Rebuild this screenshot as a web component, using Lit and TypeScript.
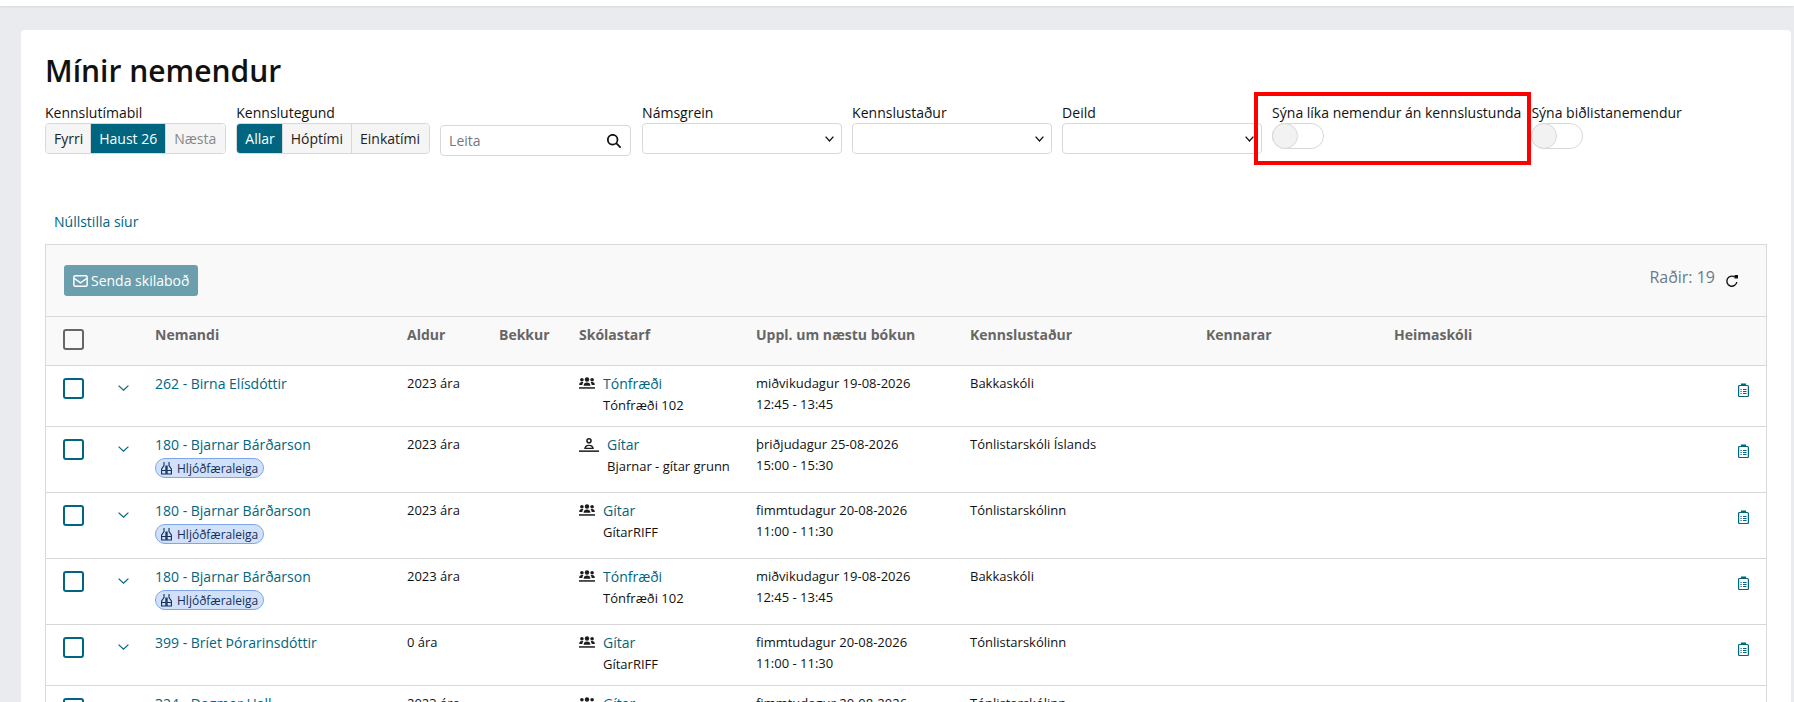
import { LitElement, css, html, svg } from "lit";
import { customElement } from "lit/decorators.js";

type Row = {
  name: string;
  badge?: boolean;
  age: string;
  single?: boolean;
  activity: string;
  group: string;
  day: string;
  time: string;
  place: string;
};

const rows: Row[] = [
  { name: "262 - Birna Elísdóttir", age: "2023 ára", activity: "Tónfræði", group: "Tónfræði 102", day: "miðvikudagur 19-08-2026", time: "12:45 - 13:45", place: "Bakkaskóli" },
  { name: "180 - Bjarnar Bárðarson", badge: true, age: "2023 ára", single: true, activity: "Gítar", group: "Bjarnar - gítar grunn", day: "þriðjudagur 25-08-2026", time: "15:00 - 15:30", place: "Tónlistarskóli Íslands" },
  { name: "180 - Bjarnar Bárðarson", badge: true, age: "2023 ára", activity: "Gítar", group: "GítarRIFF", day: "fimmtudagur 20-08-2026", time: "11:00 - 11:30", place: "Tónlistarskólinn" },
  { name: "180 - Bjarnar Bárðarson", badge: true, age: "2023 ára", activity: "Tónfræði", group: "Tónfræði 102", day: "miðvikudagur 19-08-2026", time: "12:45 - 13:45", place: "Bakkaskóli" },
  { name: "399 - Bríet Þórarinsdóttir", age: "0 ára", activity: "Gítar", group: "GítarRIFF", day: "fimmtudagur 20-08-2026", time: "11:00 - 11:30", place: "Tónlistarskólinn" },
  { name: "324 - Dagmar Hall", age: "2023 ára", activity: "Gítar", group: "GítarRIFF", day: "fimmtudagur 20-08-2026", time: "11:00 - 11:30", place: "Tónlistarskólinn" },
];

const rowChevron = html`<svg viewBox="0 0 11 6" width="11" height="6"><path d="M.6.6l4.900 4.600L10.400.6" fill="none" stroke="currentColor" stroke-width="1.200"/></svg>`;

const selectChevron = html`<svg viewBox="0 0 9 6" width="9" height="6"><path d="M.6.6l3.900 4.400L8.400.6" fill="none" stroke="currentColor" stroke-width="1.300"/></svg>`;

const groupIcon = html`<svg viewBox="0 0 16 12" width="16" height="12"><g fill="#1c1c1c">
  <circle cx="8" cy="2.500" r="2.200"/><circle cx="2.900" cy="2.700" r="1.800"/><circle cx="13.100" cy="2.700" r="1.800"/>
  <path d="M4.600 8.800c0-2.100 1.300-3.300 3.400-3.300s3.400 1.200 3.400 3.300zM.2 7.900c0-1.800 1-2.800 2.700-2.800.6 0 1.100.1 1.500.4-.7.6-1 1.400-1.100 2.400zM15.800 7.900c0-1.800-1-2.800-2.700-2.800-.6 0-1.100.1-1.500.4.700.6 1 1.400 1.100 2.400z"/>
  <rect x="0" y="10.200" width="16" height="1.500"/></g></svg>`;

const singleIcon = html`<svg viewBox="0 0 20 14" width="20" height="14"><g fill="#1c1c1c">
  <path fill-rule="evenodd" d="M10 0a2.800 2.800 0 110 5.600A2.800 2.800 0 0110 0zm0 1.500a1.300 1.300 0 100 2.600 1.300 1.300 0 000-2.600z"/>
  <path fill-rule="evenodd" d="M5.200 11c0-2.800 1.900-4.300 4.800-4.300s4.800 1.500 4.800 4.300zM7 9.700h6c-.4-1-1.500-1.600-3-1.600s-2.600.6-3 1.600z"/>
  <rect x="0" y="12.400" width="20" height="1.500"/></g></svg>`;

const binoculars = html`<svg viewBox="0 0 11 14" width="11" height="14"><g fill="none" stroke="#12305c" stroke-width="1.100">
  <path d="M3 1v3.500L.6 8v5h4.300V4.500M8 1v3.500L10.400 8v5H6.100V4.500M4.900 6.500h1.200"/><path d="M.6 9.500h4.300M6.100 9.500h4.300"/></g></svg>`;

const clipboard = svg`<svg viewBox="0 0 11 14" width="11" height="14"><g fill="none" stroke="currentColor">
  <rect x=".6" y="2.500" width="9.800" height="11" rx="1" stroke-width="1.200"/>
  <path d="M3.500 3V1h4v2" fill="currentColor" stroke-width="1.200"/>
  <path d="M5 6.500h3.500M5 8.500h3.500M5 10.500h3.500M2.500 6.500h1.200M2.500 8.500h1.200M2.500 10.500h1.200" stroke-width="1"/></g></svg>`;

@customElement("app-root")
export class AppRoot extends LitElement {
  renderFilter(label: string) {
    return html`
      <label class="field">
        <span>${label}</span>
        <div class="select">${selectChevron}</div>
      </label>
    `;
  }

  renderRow(r: Row) {
    return html`
      <div class="row ${r.badge || r.single ? "tall" : ""}">
        <div class="c-check"><span class="box"></span></div>
        <div class="c-chev">${rowChevron}</div>
        <div>
          <a class="link">${r.name}</a>
          ${r.badge
            ? html`<div class="badge">${binoculars}<span>Hljóðfæraleiga</span></div>`
            : ""}
        </div>
        <div>${r.age}</div>
        <div></div>
        <div class="activity">
          <div class="type">${r.single ? singleIcon : groupIcon}</div>
          <div>
            <a class="link">${r.activity}</a>
            <div class="sub">${r.group}</div>
          </div>
        </div>
        <div class="when"><div>${r.day}</div><div>${r.time}</div></div>
        <div>${r.place}</div>
        <div></div>
        <div></div>
        <div class="c-action">${clipboard}</div>
      </div>
    `;
  }

  render() {
    return html`
      <div class="topbar"></div>
      <main class="card">
        <h1>Mínir nemendur</h1>
        <div class="filters">
          <div class="field">
            <span>Kennslutímabil</span>
            <div class="seg">
              <button>Fyrri</button>
              <button class="on">Haust 26</button>
              <button class="off">Næsta</button>
            </div>
          </div>
          <div class="field">
            <span>Kennslutegund</span>
            <div class="seg">
              <button class="on">Allar</button>
              <button>Hóptími</button>
              <button>Einkatími</button>
            </div>
          </div>
          <div class="search">
            <span>Leita</span>
            <svg viewBox="0 0 512 512" width="14" height="14"><path fill="#111" d="M416 208c0 45.900-14.900 88.300-40 122.700L502.600 457.400c12.500 12.500 12.500 32.800 0 45.300s-32.800 12.500-45.300 0L330.700 376c-34.400 25.200-76.800 40-122.700 40C93.100 416 0 322.900 0 208S93.100 0 208 0S416 93.100 416 208zM208 352a144 144 0 1 0 0-288 144 144 0 1 0 0 288z"/></svg>
          </div>
          ${this.renderFilter("Námsgrein")}
          ${this.renderFilter("Kennslustaður")}
          ${this.renderFilter("Deild")}
          <div class="toggle-field">
            <span>Sýna líka nemendur án kennslustunda</span>
            <div class="toggle"></div>
            <div class="red"></div>
          </div>
          <div class="toggle-field">
            <span>Sýna biðlistanemendur</span>
            <div class="toggle"></div>
          </div>
        </div>
        <a class="link reset">Núllstilla síur</a>
        <section class="table">
          <div class="toolbar">
            <button class="send">
              <svg viewBox="0 0 16 13" width="15" height="12"><g fill="none" stroke="currentColor" stroke-width="1.600"><rect x=".8" y=".8" width="14.400" height="11.400" rx="1.500"/><path d="M1 3.500l7 5 7-5"/></g></svg>
              Senda skilaboð
            </button>
            <div class="count">
              <span>Raðir: 19</span>
              <svg viewBox="0 0 14 14" width="14" height="14"><path d="M11.800 8a5 5 0 11-2.200-5" fill="none" stroke="#111" stroke-width="1.400"/><path d="M9.500 1H13v3.500H9.500z" fill="#111"/></svg>
            </div>
          </div>
          <div class="row head">
            <div class="c-check"><span class="box"></span></div>
            <div></div>
            <div>Nemandi</div>
            <div>Aldur</div>
            <div>Bekkur</div>
            <div>Skólastarf</div>
            <div>Uppl. um næstu bókun</div>
            <div>Kennslustaður</div>
            <div>Kennarar</div>
            <div>Heimaskóli</div>
            <div></div>
          </div>
          ${rows.map((r) => this.renderRow(r))}
        </section>
      </main>
    `;
  }

  static styles = css`
    :host {
      display: block;
      height: 702px;
      overflow: hidden;
      background: #e9ebef;
      font-family: "Open Sans", sans-serif;
      font-size: 13px;
      color: #111;
    }

    .topbar {
      height: 6px;
      background: #fff;
      box-shadow: 0 1px 3px rgba(0, 0, 0, 0.08);
    }

    .card {
      margin: 24px 3px 0 21px;
      padding: 22px 24px 0;
      background: #fff;
      border-radius: 4px;
    }

    h1 {
      margin: 0;
      font-size: 30px;
      line-height: 38px;
      font-weight: 600;
      height: 51px;
    }

    .link {
      color: #00667f;
      font-size: 14px;
    }

    .filters {
      display: flex;
      align-items: flex-start;
      height: 109px;
    }

    .field {
      display: flex;
      flex-direction: column;
      margin-right: 10px;
      font-size: 14px;
      line-height: 19px;
    }

    .seg {
      display: flex;
      height: 31px;
      margin-top: 1px;
      border-radius: 4px;
      overflow: hidden;
      border: 1px solid #d8d8d8;
      box-sizing: border-box;
    }

    .seg button {
      padding: 0 8px;
      border: 0;
      border-left: 1px solid #d8d8d8;
      background: #f5f5f5;
      font: inherit;
      font-size: 14px;
      color: #222;
    }

    .seg button:first-child {
      border-left: 0;
      padding-right: 7px;
    }

    .seg button:last-child {
      padding-right: 9px;
    }

    .seg .on {
      background: #00667f;
      color: #fff;
    }

    .seg .off {
      color: #888;
    }

    .search {
      box-sizing: border-box;
      display: flex;
      align-items: center;
      justify-content: space-between;
      width: 191px;
      height: 31px;
      margin: 22px 11px 0 0;
      padding: 0 9px 0 8px;
      border: 1px solid #d8d8d8;
      border-radius: 4px;
      font-size: 14px;
      color: #777;
    }

    .select {
      box-sizing: border-box;
      display: flex;
      align-items: center;
      justify-content: flex-end;
      width: 200px;
      height: 31px;
      margin-top: 1px;
      padding-right: 7px;
      border: 1px solid #d8d8d8;
      border-radius: 4px;
      color: #111;
    }

    .toggle-field {
      position: relative;
      font-size: 14px;
      line-height: 19px;
      white-space: nowrap;
      margin-right: 10px;
    }

    .toggle {
      box-sizing: border-box;
      position: relative;
      width: 52px;
      height: 26px;
      margin-top: 1px;
      border: 1px solid #d8d8d8;
      border-radius: 13px;
    }

    .toggle::before {
      content: "";
      position: absolute;
      left: -1px;
      top: -1px;
      box-sizing: border-box;
      width: 26px;
      height: 26px;
      border: 1px solid #d8d8d8;
      border-radius: 50%;
      background: #f2f2f2;
    }

    .red {
      position: absolute;
      left: -18px;
      top: -11px;
      width: 277px;
      height: 73px;
      box-sizing: border-box;
      border: 4px solid #f00;
    }

    .reset {
      display: block;
      margin-left: 9px;
      height: 32px;
      line-height: 19px;
    }

    .table {
      border: 1px solid #d8d8de;
      border-bottom: 0;
    }

    .toolbar {
      display: flex;
      align-items: flex-start;
      justify-content: space-between;
      height: 71px;
      box-sizing: border-box;
      padding: 20px 27px 0 18px;
      background: #f9f9f9;
    }

    .send {
      display: flex;
      align-items: center;
      gap: 3px;
      height: 31px;
      padding: 0 9px;
      border: 0;
      border-radius: 3px;
      background: #6b9fae;
      color: #fff;
      font: inherit;
      font-size: 14px;
    }

    .count {
      display: flex;
      align-items: center;
      gap: 10px;
      margin-top: 1px;
      font-size: 16px;
      line-height: 22px;
      color: #6c7a89;
    }

    .count svg {
      margin-top: 7px;
    }

    .row {
      display: grid;
      grid-template-columns: 69px 40px 252px 92px 80px 177px 214px 236px 188px 1fr 28px;
      height: 61px;
      box-sizing: border-box;
      padding-top: 8px;
      border-top: 1px solid #d8d8d8;
      font-size: 13px;
      line-height: 19px;
    }

    .row.tall {
      height: 66px;
    }

    .row.head {
      height: 49px;
      background: #f9f9f9;
      font-size: 14px;
      font-weight: 700;
      color: #666;
    }

    .c-check {
      padding: 4px 0 0 17px;
    }

    .box {
      display: block;
      width: 21px;
      height: 21px;
      box-sizing: border-box;
      border: 2px solid #00667f;
      border-radius: 3px;
    }

    .head .box {
      border-color: #666;
    }

    .c-chev {
      padding: 11px 0 0 3px;
      color: #00667f;
      line-height: 0;
    }

    .badge {
      display: inline-flex;
      align-items: center;
      gap: 5px;
      box-sizing: border-box;
      height: 20px;
      margin-top: 3px;
      padding: 0 5px;
      border: 1px solid #7fa6e8;
      border-radius: 10px;
      background: #d2e1fa;
      font-size: 12px;
      color: #12305c;
    }

    .activity {
      display: flex;
      gap: 8px;
    }

    .type {
      line-height: 0;
      padding-top: 3px;
    }

    .sub {
      margin-top: 2px;
    }

    .when div + div {
      margin-top: 2px;
    }

    .c-action {
      padding-top: 9px;
      color: #00667f;
      line-height: 0;
    }
  `;
}
